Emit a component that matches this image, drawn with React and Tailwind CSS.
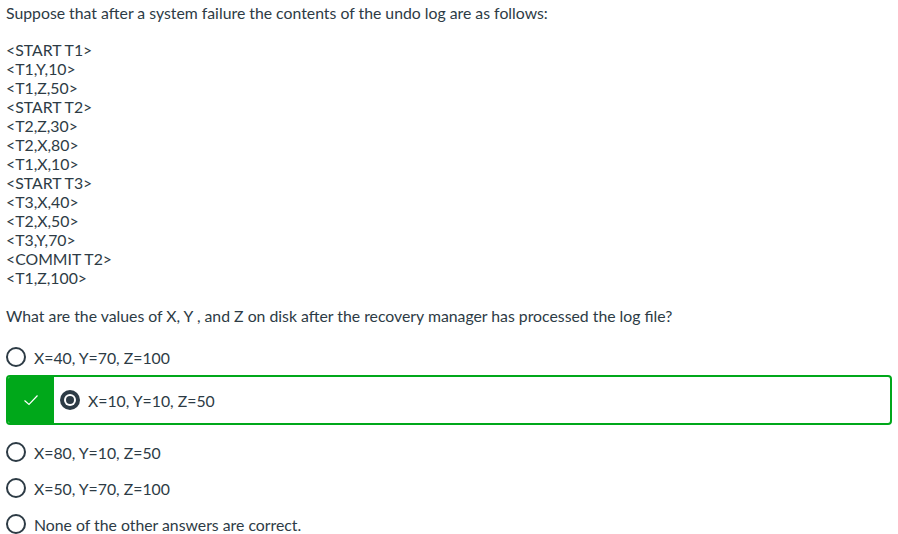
import React from "react";

const logLines = [
  "<START T1>",
  "<T1,Y,10>",
  "<T1,Z,50>",
  "<START T2>",
  "<T2,Z,30>",
  "<T2,X,80>",
  "<T1,X,10>",
  "<START T3>",
  "<T3,X,40>",
  "<T2,X,50>",
  "<T3,Y,70>",
  "<COMMIT T2>",
  "<T1,Z,100>",
];

const Radio = ({ checked }) =>
  checked ? (
    <span className="flex h-5 w-5 shrink-0 items-center justify-center rounded-full bg-[#2d3b45]">
      <span className="flex h-3 w-3 items-center justify-center rounded-full bg-white">
        <span className="h-2 w-2 rounded-full bg-[#2d3b45]" />
      </span>
    </span>
  ) : (
    <span className="h-5 w-5 shrink-0 rounded-full border-2 border-[#2d3b45]" />
  );

const Option = ({ label }) => (
  <div className="flex h-9 items-center gap-2 pl-[6px]">
    <Radio />
    <span>{label}</span>
  </div>
);

export default function App() {
  return (
    <div className="bg-white pl-[6px] pt-[3px] text-[15.8px] leading-[19px] text-[#2d3b45] w-[898px] h-[534px] overflow-hidden" style={{ fontFamily: "Lato, 'Liberation Sans', sans-serif" }}>
      <p>Suppose that after a system failure the contents of the undo log are as follows:</p>
      <div className="mt-[18px]">
        {logLines.map((line) => (
          <div key={line}>{line}</div>
        ))}
      </div>
      <p className="mt-[19px]">What are the values of X, Y , and Z on disk after the recovery manager has processed the log file?</p>
      <div className="-ml-[6px] mt-[14px]">
        <Option label="X=40, Y=70, Z=100" />
        <div className="ml-[6px] mr-[6px] flex h-[50px] overflow-hidden rounded-[4px] border-2 border-[#00a81a]">
          <div className="flex w-[46px] items-center justify-center bg-[#00a81a]">
            <svg width="16" height="12" viewBox="0 0 16 12" fill="none">
              <path d="M1.5 6.5 L6 10.5 L14.5 1.5" stroke="white" strokeWidth="1.2" />
            </svg>
          </div>
          <div className="flex items-center gap-2 pl-[6px]">
            <Radio checked />
            <span>X=10, Y=10, Z=50</span>
          </div>
        </div>
        <div className="mt-[9px]">
          <Option label="X=80, Y=10, Z=50" />
          <Option label="X=50, Y=70, Z=100" />
          <Option label="None of the other answers are correct." />
        </div>
      </div>
    </div>
  );
}
